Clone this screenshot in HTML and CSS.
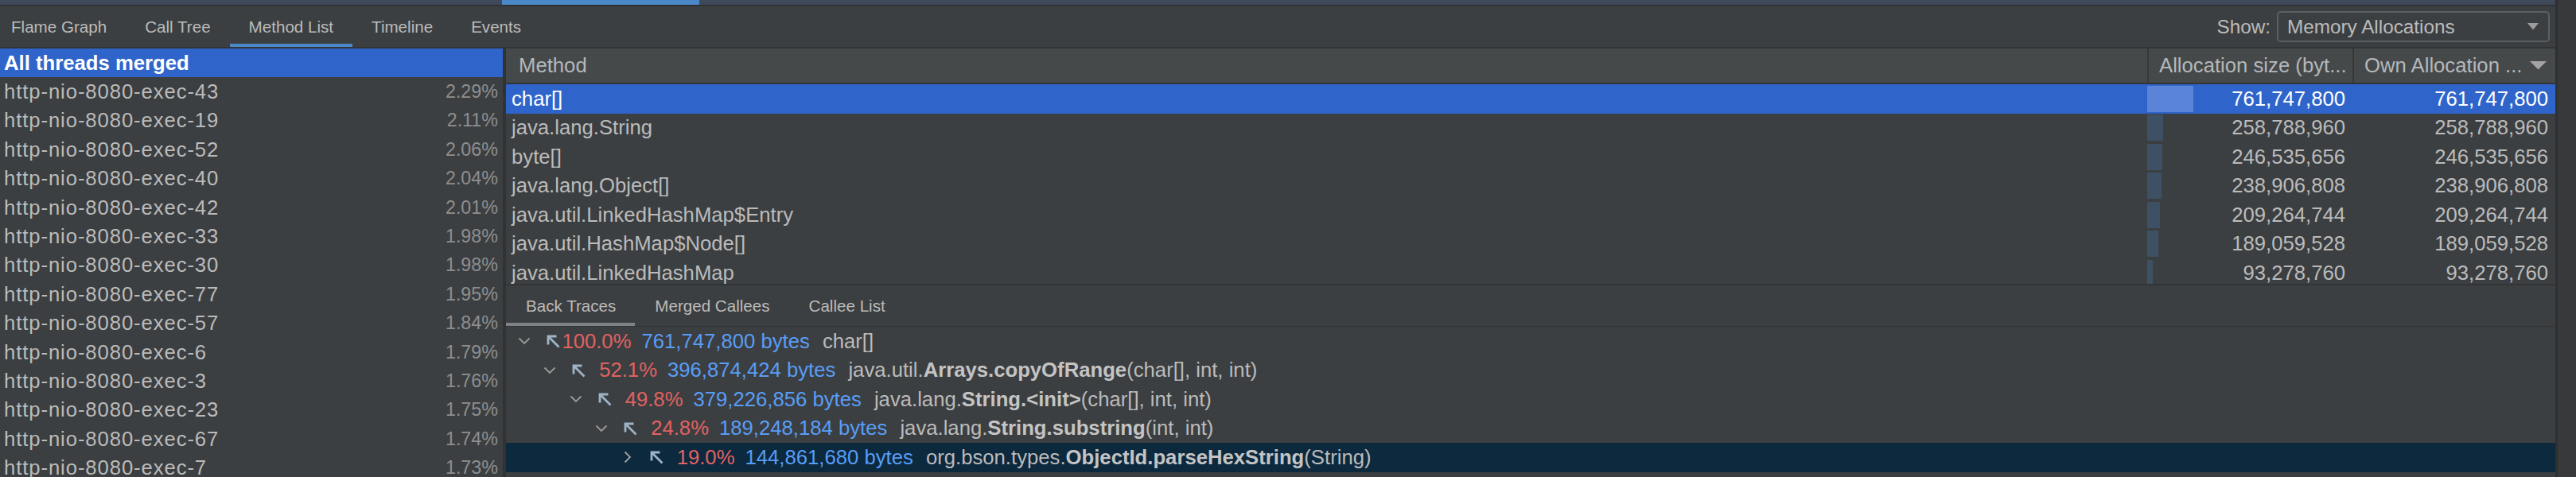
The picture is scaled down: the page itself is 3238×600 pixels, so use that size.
FILE: index.html
```html
<!DOCTYPE html>
<html>
<head>
<meta charset="utf-8">
<link rel="stylesheet" href="styles.css">
</head>
<body>
<div class="app">
  <div class="main">
    <div class="topstrip"><div class="topstrip-active"></div></div>
    <div class="tabbar">
      <div class="tab first">Flame Graph</div>
      <div class="tab">Call Tree</div>
      <div class="tab active">Method List</div>
      <div class="tab">Timeline</div>
      <div class="tab">Events</div>
      <div class="show">
        <span>Show:</span>
        <div class="dropdown">
          <span>Memory Allocations</span>
          <svg class="dd-arrow" viewBox="0 0 14 9"><polygon points="0,0 14,0 7,8.5" fill="#9c9c9c"/></svg>
        </div>
      </div>
    </div>
    <div class="content">
      <div class="threads">
        <div class="thread sel"><span>All threads merged</span></div>
        <div class="thread"><span class="tname">http-nio-8080-exec-43</span><span class="pct">2.29%</span></div>
        <div class="thread"><span class="tname">http-nio-8080-exec-19</span><span class="pct">2.11%</span></div>
        <div class="thread"><span class="tname">http-nio-8080-exec-52</span><span class="pct">2.06%</span></div>
        <div class="thread"><span class="tname">http-nio-8080-exec-40</span><span class="pct">2.04%</span></div>
        <div class="thread"><span class="tname">http-nio-8080-exec-42</span><span class="pct">2.01%</span></div>
        <div class="thread"><span class="tname">http-nio-8080-exec-33</span><span class="pct">1.98%</span></div>
        <div class="thread"><span class="tname">http-nio-8080-exec-30</span><span class="pct">1.98%</span></div>
        <div class="thread"><span class="tname">http-nio-8080-exec-77</span><span class="pct">1.95%</span></div>
        <div class="thread"><span class="tname">http-nio-8080-exec-57</span><span class="pct">1.84%</span></div>
        <div class="thread"><span class="tname">http-nio-8080-exec-6</span><span class="pct">1.79%</span></div>
        <div class="thread"><span class="tname">http-nio-8080-exec-3</span><span class="pct">1.76%</span></div>
        <div class="thread"><span class="tname">http-nio-8080-exec-23</span><span class="pct">1.75%</span></div>
        <div class="thread"><span class="tname">http-nio-8080-exec-67</span><span class="pct">1.74%</span></div>
        <div class="thread"><span class="tname">http-nio-8080-exec-7</span><span class="pct">1.73%</span></div>
      </div>
      <div class="splitter"></div>
      <div class="right">
        <div class="table">
          <div class="thead">
            <div class="th">Method</div>
            <div class="th sep">Allocation size (byt...</div>
            <div class="th sep sorted"><span>Own Allocation ...</span><svg class="sort-arrow" viewBox="0 0 21 11"><polygon points="0,0 21,0 10.5,10.5" fill="#a4a4a4"/></svg></div>
          </div>
          <div class="tbody">
            <div class="tr sel">
              <div class="td-name">char[]</div>
              <div class="td-num"><div class="bar" style="width:58px"></div><div class="num">761,747,800</div></div>
              <div class="td-num"><div class="num">761,747,800</div></div>
            </div>
            <div class="tr">
              <div class="td-name">java.lang.String</div>
              <div class="td-num"><div class="bar" style="width:19.7px"></div><div class="num">258,788,960</div></div>
              <div class="td-num"><div class="num">258,788,960</div></div>
            </div>
            <div class="tr">
              <div class="td-name">byte[]</div>
              <div class="td-num"><div class="bar" style="width:18.8px"></div><div class="num">246,535,656</div></div>
              <div class="td-num"><div class="num">246,535,656</div></div>
            </div>
            <div class="tr">
              <div class="td-name">java.lang.Object[]</div>
              <div class="td-num"><div class="bar" style="width:18.2px"></div><div class="num">238,906,808</div></div>
              <div class="td-num"><div class="num">238,906,808</div></div>
            </div>
            <div class="tr">
              <div class="td-name">java.util.LinkedHashMap$Entry</div>
              <div class="td-num"><div class="bar" style="width:15.9px"></div><div class="num">209,264,744</div></div>
              <div class="td-num"><div class="num">209,264,744</div></div>
            </div>
            <div class="tr">
              <div class="td-name">java.util.HashMap$Node[]</div>
              <div class="td-num"><div class="bar" style="width:14.4px"></div><div class="num">189,059,528</div></div>
              <div class="td-num"><div class="num">189,059,528</div></div>
            </div>
            <div class="tr">
              <div class="td-name">java.util.LinkedHashMap</div>
              <div class="td-num"><div class="bar" style="width:7.1px"></div><div class="num">93,278,760</div></div>
              <div class="td-num"><div class="num">93,278,760</div></div>
            </div>
          </div>
        </div>
        <div class="subtabs">
          <div class="subtab active">Back Traces</div>
          <div class="subtab">Merged Callees</div>
          <div class="subtab">Callee List</div>
        </div>
        <div class="tree">
          <div class="node d0">
            <span class="chev"><svg viewBox="0 0 16 10" width="16" height="10"><polyline points="1.5,1.5 8,8 14.5,1.5" fill="none" stroke="#9a9a9a" stroke-width="1.8"/></svg></span>
            <svg class="arrow" viewBox="0 0 18 18"><path d="M3 13.5V3H13.5M3 3L16.5 16.5" fill="none" stroke="#9fb3c6" stroke-width="2.8"/></svg>
            <span class="tpct">100.0%</span><span class="bytes">761,747,800 bytes</span><span class="meth">char[]</span>
          </div>
          <div class="node d1">
            <span class="chev"><svg viewBox="0 0 16 10" width="16" height="10"><polyline points="1.5,1.5 8,8 14.5,1.5" fill="none" stroke="#9a9a9a" stroke-width="1.8"/></svg></span>
            <svg class="arrow" viewBox="0 0 18 18"><path d="M3 13.5V3H13.5M3 3L16.5 16.5" fill="none" stroke="#9fb3c6" stroke-width="2.8"/></svg>
            <span class="tpct">52.1%</span><span class="bytes">396,874,424 bytes</span><span class="meth">java.util.<b>Arrays.copyOfRange</b>(char[], int, int)</span>
          </div>
          <div class="node d2">
            <span class="chev"><svg viewBox="0 0 16 10" width="16" height="10"><polyline points="1.5,1.5 8,8 14.5,1.5" fill="none" stroke="#9a9a9a" stroke-width="1.8"/></svg></span>
            <svg class="arrow" viewBox="0 0 18 18"><path d="M3 13.5V3H13.5M3 3L16.5 16.5" fill="none" stroke="#9fb3c6" stroke-width="2.8"/></svg>
            <span class="tpct">49.8%</span><span class="bytes">379,226,856 bytes</span><span class="meth">java.lang.<b>String.&lt;init&gt;</b>(char[], int, int)</span>
          </div>
          <div class="node d3">
            <span class="chev"><svg viewBox="0 0 16 10" width="16" height="10"><polyline points="1.5,1.5 8,8 14.5,1.5" fill="none" stroke="#9a9a9a" stroke-width="1.8"/></svg></span>
            <svg class="arrow" viewBox="0 0 18 18"><path d="M3 13.5V3H13.5M3 3L16.5 16.5" fill="none" stroke="#9fb3c6" stroke-width="2.8"/></svg>
            <span class="tpct">24.8%</span><span class="bytes">189,248,184 bytes</span><span class="meth">java.lang.<b>String.substring</b>(int, int)</span>
          </div>
          <div class="node d4 sel">
            <span class="chev"><svg viewBox="0 0 10 16" width="10" height="16"><polyline points="1.5,1.5 8,8 1.5,14.5" fill="none" stroke="#a0a0a0" stroke-width="1.8"/></svg></span>
            <svg class="arrow" viewBox="0 0 18 18"><path d="M3 13.5V3H13.5M3 3L16.5 16.5" fill="none" stroke="#9fb3c6" stroke-width="2.8"/></svg>
            <span class="tpct">19.0%</span><span class="bytes">144,861,680 bytes</span><span class="meth">org.bson.types.<b>ObjectId.parseHexString</b>(String)</span>
          </div>
        </div>
      </div>
    </div>
  </div>
  <div class="rstrip"></div>
</div>
</body>
</html>
```

FILE: styles.css
```css
html, body {
  margin: 0;
  padding: 0;
  background: #3c3f41;
}
body {
  font-family: "Liberation Sans", Arial, sans-serif;
  color: #bbbbbb;
  font-size: 25.7px;
}
.app {
  display: flex;
  width: 3238px;
  height: 600px;
  overflow: hidden;
}
.main {
  width: 3212px;
  flex: none;
  display: flex;
  flex-direction: column;
}
.topstrip {
  height: 6px;
  background: #3e4a59;
  border-bottom: 2px solid #2f3133;
  flex: none;
}
.topstrip-active {
  margin-left: 631px;
  width: 248px;
  height: 6px;
  background: #4a88c7;
}
.tabbar {
  height: 51px;
  flex: none;
  display: flex;
  align-items: center;
  border-bottom: 2px solid #323436;
}
.tab {
  height: 100%;
  box-sizing: border-box;
  display: flex;
  align-items: center;
  padding: 0 24px;
  font-size: 20.6px;
  color: #bbbbbb;
  white-space: nowrap;
}
.tab.first {
  padding-left: 14px;
}
.tab.active {
  box-shadow: inset 0 -4px 0 #4a88c7;
}
.show {
  margin-left: auto;
  margin-right: 7px;
  display: flex;
  align-items: center;
  font-size: 24.3px;
  gap: 8px;
}
.dropdown {
  width: 343px;
  height: 39px;
  box-sizing: border-box;
  border: 2px solid #5c5f61;
  border-radius: 5px;
  display: flex;
  align-items: center;
  justify-content: space-between;
  padding: 0 12px 0 11px;
}
.dd-arrow {
  width: 14px;
  height: 9px;
}
.content {
  flex: 1;
  display: flex;
  min-height: 0;
}
.threads {
  width: 632px;
  flex: none;
  overflow: hidden;
}
.thread {
  height: 36.4px;
  box-sizing: border-box;
  display: flex;
  align-items: center;
  justify-content: space-between;
  padding: 0 6px 0 5px;
  font-size: 25.7px;
  white-space: nowrap;
}
.thread.sel {
  background: #2f65ca;
  color: #ffffff;
  font-weight: 700;
}
.tname {
  letter-spacing: 0.9px;
}
.pct {
  color: #8e8e8e;
  font-size: 23.3px;
}
.splitter {
  width: 4px;
  flex: none;
  background: #303234;
}
.right {
  flex: 1;
  min-width: 0;
  display: flex;
  flex-direction: column;
}
.table {
  height: 296px;
  flex: none;
  overflow: hidden;
  border-bottom: 2px solid #323436;
}
.thead {
  display: grid;
  grid-template-columns: 1fr 258px 255px;
  height: 43px;
  background: #45494a;
  border-bottom: 2px solid #323436;
}
.th {
  display: flex;
  align-items: center;
  padding-left: 16px;
  font-size: 25.7px;
  color: #b4b8bb;
  white-space: nowrap;
  overflow: hidden;
}
.th.sep {
  border-left: 2px solid #363839;
  padding-left: 13px;
}
.th.sorted {
  justify-content: space-between;
  padding-right: 11px;
}
.sort-arrow {
  width: 21px;
  height: 11px;
  flex: none;
}
.tbody {
  height: 251px;
  overflow: hidden;
}
.tr {
  display: grid;
  grid-template-columns: 1fr 258px 255px;
  height: 36.5px;
  align-items: center;
  font-size: 25.7px;
  white-space: nowrap;
}
.tr.sel {
  background: #2f65ca;
  color: #ffffff;
}
.td-name {
  padding-left: 7px;
}
.td-num {
  display: grid;
  height: 100%;
  align-items: center;
}
.td-num > * {
  grid-area: 1 / 1;
}
.bar {
  justify-self: start;
  height: 33px;
  background: #3e5164;
}
.tr.sel .bar {
  background: #5a84d8;
}
.num {
  justify-self: end;
  padding-right: 9px;
}
.subtabs {
  height: 51px;
  flex: none;
  display: flex;
  border-bottom: 1px solid #323436;
}
.subtab {
  height: 100%;
  box-sizing: border-box;
  display: flex;
  align-items: center;
  padding: 0 24px 0 25px;
  font-size: 20.6px;
  color: #bbbbbb;
  white-space: nowrap;
}
.subtab.active {
  box-shadow: inset 0 -4px 0 #7e8286;
}
.tree {
  flex: 1;
  overflow: hidden;
}
.node {
  height: 36.5px;
  display: flex;
  align-items: center;
  white-space: nowrap;
  font-size: 25.7px;
}
.node.sel {
  background: #0d293e;
}
.d0 { padding-left: 12.5px; }
.d1 { padding-left: 45px; }
.d2 { padding-left: 77.5px; }
.d3 { padding-left: 110px; }
.d4 { padding-left: 142.5px; }
.chev {
  width: 20px;
  height: 20px;
  margin-right: 17px;
  display: flex;
  align-items: center;
  justify-content: center;
  flex: none;
}
.arrow {
  width: 18px;
  height: 18px;
  margin-right: 2px;
  flex: none;
}
.tpct {
  width: 88px;
  text-align: right;
  color: #e06262;
  margin-right: 13px;
  flex: none;
}
.bytes {
  color: #589df6;
  margin-right: 16px;
}
.meth b {
  font-weight: 700;
  color: #c4c4c4;
}
.rstrip {
  flex: 1;
  background: #37393b;
  border-left: 3px solid #2e3032;
}
```
